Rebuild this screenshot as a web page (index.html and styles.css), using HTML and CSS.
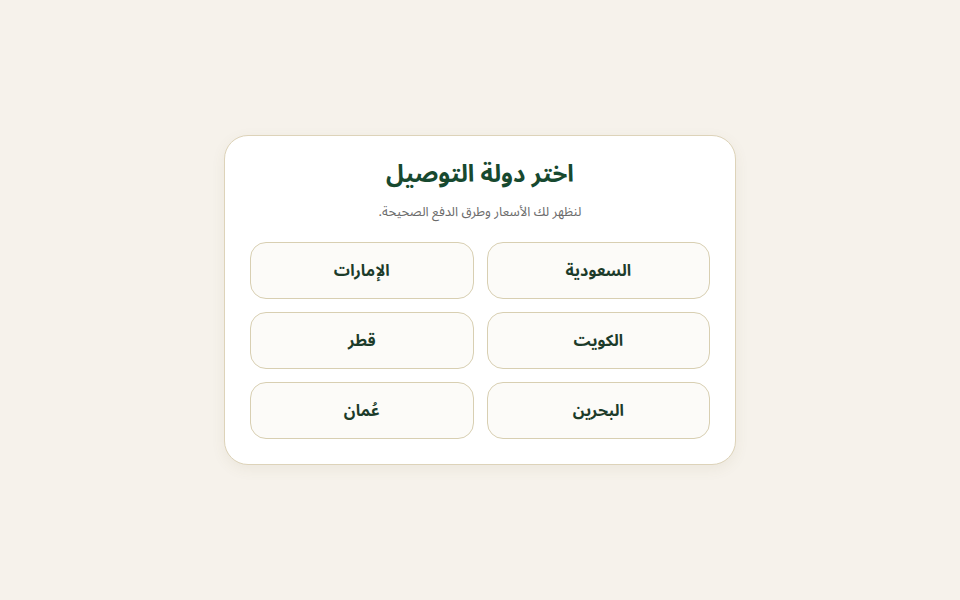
FILE: index.html
```html
<!DOCTYPE html>
<html lang="ar" dir="rtl">
  <head>
    <meta charset="utf-8">
    <title>اختر دولة التوصيل</title>

    <link rel="stylesheet" href="styles.css">
  </head>

  <body>
    <div class="page">
      <div class="card">
        <h1 class="title">اختر دولة التوصيل</h1>
        <p class="subtitle">لنظهر لك الأسعار وطرق الدفع الصحيحة.</p>

        <div class="countries">
          <button class="country">السعودية</button>
          <button class="country">الإمارات</button>
          <button class="country">الكويت</button>
          <button class="country">قطر</button>
          <button class="country">البحرين</button>
          <button class="country">عُمان</button>
        </div>
      </div>
    </div>
  </body>
</html>
```

FILE: styles.css
```css
body {
  margin: 0;
  background-color: #f6f2eb;
  font-family: "Noto Sans Arabic", "DejaVu Sans", "Noto Sans", sans-serif;
}

.page {
  height: 600px;
  display: flex;
  align-items: center;
  justify-content: center;
}

.card {
  box-sizing: border-box;
  width: 512px;
  padding: 23px 25px 25px;
  background-color: #ffffff;
  border: 1px solid #ddd3b9;
  border-radius: 24px;
  box-shadow: 0 4px 14px rgba(120, 100, 60, 0.08);
  text-align: center;
}

.title {
  margin: 0;
  font-size: 24px;
  font-weight: bold;
  line-height: 32px;
  color: #17492f;
}

.subtitle {
  margin: 12px 0 21px;
  font-size: 13px;
  line-height: 18px;
  color: #6b6b6b;
}

.countries {
  display: grid;
  grid-template-columns: 1fr 1fr;
  gap: 13px 13px;
}

.country {
  height: 57px;
  padding: 0;
  background-color: #fcfbf8;
  border: 1px solid #d8cfb2;
  border-radius: 16px;
  font-family: inherit;
  font-size: 16px;
  font-weight: bold;
  color: #1c3b2a;
  cursor: pointer;
}
```
